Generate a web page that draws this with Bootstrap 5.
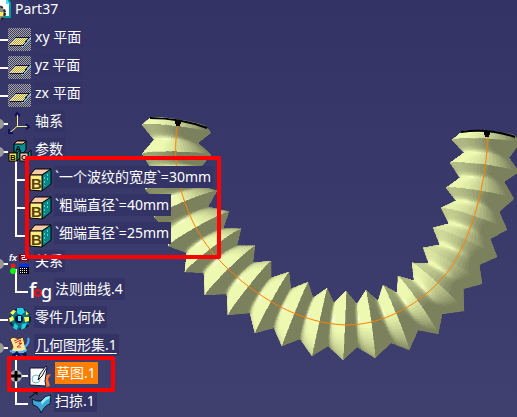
<!DOCTYPE html>
<html lang="zh-CN">
<head>
<meta charset="utf-8">
<meta name="viewport" content="width=device-width, initial-scale=1">
<title>Part37</title>
<link href="https://cdn.jsdelivr.net/npm/bootstrap@5.3.0/dist/css/bootstrap.min.css" rel="stylesheet">
<style>
  body { background: #3c3c6c; color: #fff; font-family: "Noto Sans", "Noto Sans CJK SC", sans-serif; font-size: 14px; line-height: 22px; }
  .viewer { background: linear-gradient(#333366, #40406f); }
  .tree { margin-top: -5px; }
  .node { height: 28px; }
  .node svg { height: 28px; flex: none; overflow: visible; }
  .tag { background: #333366; color: #fff; padding: 0 2px 0 1px; text-decoration: none; white-space: nowrap; }
  .tag.current { text-decoration: underline; text-underline-offset: 3px; }
  .tag.picked { background: #ff8000; }
  .outlined::after { content: ""; position: absolute; z-index: 2; border: 4px solid #f00; border-radius: 2px; pointer-events: none; }
  .outlined-params::after { top: -7px; bottom: -12px; left: 25px; width: 196px; }
  .outlined-sketch::after { top: -3px; bottom: -5px; left: 7px; width: 108px; }
  svg text { font-family: "Liberation Sans", sans-serif; font-weight: bold; }
  svg .law { font-family: "Noto Sans", sans-serif; font-weight: 500; }
</style>
<script src="https://cdn.jsdelivr.net/npm/bootstrap@5.3.0/dist/js/bootstrap.bundle.min.js"></script>
</head>
<body>

<svg width="0" height="0" class="position-absolute" aria-hidden="true">
  <defs>
    <pattern id="dither" width="2" height="2" patternUnits="userSpaceOnUse"><path fill="#a8a8a0" d="M0 0h1v1H0zM1 1h1v1H1z"/></pattern>
    <pattern id="weave" width="2" height="2" patternUnits="userSpaceOnUse"><path fill="#ffff90" d="M0 0h2v2H0z"/><path fill="#b89860" d="M0 0h1v1H0zM1 1h1v1H1z"/></pattern>
    <g id="stub"><path fill="#fff" d="M0 16h8v2H0z"/></g>
    <g id="knob"><path fill="#fff" d="M3 16h5v2H3z"/><circle cx="-1" cy="17" r="5" fill="#999"/></g>
    <g id="plane" shape-rendering="crispEdges">
      <path fill="#3a3a68" d="M8 5h23v23H8z"/><path fill="url(#dither)" d="M8 5h23v23H8z"/>
      <path fill="#80c0c8" d="M29 15h2l-7 9h-3l1-1z"/>
      <path fill="url(#weave)" d="M16 15h13l-6 7H10z"/>
      <path fill="none" stroke="#101040" d="M15 14.500h15M10 22.500h13l6-8"/>
    </g>
    <g id="cube" stroke="#000" stroke-linejoin="round">
      <path fill="#ffc8a8" d="M30 12l5-6h16l-9 6z"/><path fill="#008888" d="M42 12l9-6v15l-9 7z"/>
      <path fill="#ffef80" d="M30 12h12v16l-12-1z"/>
      <path stroke="#60d0d0" stroke-dasharray="2 2" d="M44.500 14v9m3-12v8"/>
      <text x="31" y="26" font-size="15" fill="#584010" stroke="none">B</text>
    </g>
  </defs>
</svg>

<main class="viewer position-relative min-vh-100 overflow-hidden">
  <svg id="model" class="position-absolute top-0 start-0 w-100 h-auto" viewBox="0 0 517 417" role="img" aria-label="波纹管">
    <g id="skin" shape-rendering="crispEdges"></g>
    <path fill="none" stroke="#000" stroke-width="2" d="M150 118Q180 118 207 128M461 132Q489 128 515 137"/>
    <path fill="none" stroke="#ff8000" d="M178 123C175 140 175 155 177 170C182 205 198 240 224 265C254 295 300 325 349 325C390 324 428 298 449 270C472 237 486 185 488 134"/>
    <path d="M175 120h6v4h-1v2h-4v-2h-1zM484 131h6v4h-1v2h-4v-2h-1z"/>
  </svg>

  <ul class="tree list-unstyled position-relative mb-0">
    <li class="node d-flex align-items-center">
      <svg width="14" aria-hidden="true"><path fill="#fff" stroke="#009ca0" stroke-width="2" d="M-2 3h9l3 5v14H-2z"/><path fill="#40e0ff" d="M6 3l4 6H6z"/><circle cx="-2" cy="18" r="7" fill="#888" stroke="#222" stroke-width="2" stroke-dasharray="3 2"/><path fill="#ffe860" d="M0 17h3v4H0z"/></svg>
      <a href="#" class="tag">Part37</a>
    </li>
    <li class="node d-flex align-items-center"><svg width="34" aria-hidden="true"><use href="#stub"/><use href="#plane"/></svg><a href="#" class="tag">xy 平面</a></li>
    <li class="node d-flex align-items-center"><svg width="34" aria-hidden="true"><use href="#stub"/><use href="#plane"/></svg><a href="#" class="tag">yz 平面</a></li>
    <li class="node d-flex align-items-center"><svg width="34" aria-hidden="true"><use href="#stub"/><use href="#plane"/></svg><a href="#" class="tag">zx 平面</a></li>
    <li class="node d-flex align-items-center">
      <svg width="34" aria-hidden="true"><use href="#knob"/><path fill="none" stroke="#ffef80" d="M17.500 7v12l-8 7M17 19.500h11"/><path fill="none" stroke="#101060" stroke-width="2" d="M15 9l2-3 3 3M26 17l3 3-3 2M9 22v4h4"/></svg>
      <a href="#" class="tag">轴系</a>
    </li>
    <li>
      <div class="node d-flex align-items-center">
        <svg width="34" aria-hidden="true"><use href="#knob"/><path fill="#fff" d="M15 22h2v6h-2z"/>
          <g stroke="#000" stroke-linejoin="round"><path fill="#009090" d="M14 9l3-3h9v9l-3 3h-9z"/><path fill="#ffc8a8" d="M14 9l3-3h9l-3 3z"/><path fill="#ffef40" d="M9 18h8v8H9z"/><path fill="#009090" d="M17 18l3-3v8l-3 3zM28 18l3-3v8l-3 3z"/><path fill="#ffc8b8" d="M20 18h8v8h-8z"/></g>
          <text x="15" y="17" font-size="9">A</text><text x="10" y="25" font-size="8">B</text><text x="21" y="25" font-size="8">C</text></svg>
        <a href="#" class="tag">参数</a>
      </div>
      <ul class="list-unstyled position-relative outlined outlined-params">
        <li class="node d-flex align-items-center"><svg width="54" aria-hidden="true"><path fill="#fff" d="M15 0h2v28h-2zM17 16h8v2h-8z"/><use href="#cube"/></svg><a href="#" class="tag">`一个波纹的宽度`=30mm</a></li>
        <li class="node d-flex align-items-center"><svg width="54" aria-hidden="true"><path fill="#fff" d="M15 0h2v28h-2zM17 16h8v2h-8z"/><use href="#cube"/></svg><a href="#" class="tag">`粗端直径`=40mm</a></li>
        <li class="node d-flex align-items-center"><svg width="54" aria-hidden="true"><path fill="#fff" d="M15 0h2v18h-2zM17 16h8v2h-8z"/><use href="#cube"/></svg><a href="#" class="tag">`细端直径`=25mm</a></li>
      </ul>
    </li>
    <li>
      <div class="node d-flex align-items-center">
        <svg width="34" aria-hidden="true"><use href="#knob"/><path fill="#fff" d="M15 22h2v6h-2z"/>
          <text x="9" y="14" font-size="9" font-style="italic" fill="#fff">fx</text>
          <path fill="#800010" d="M19 7h10v7H19z"/><path fill="none" stroke="#fff" d="M21 8.500h4v2h-3v2h5"/>
          <circle cx="13" cy="19" r="2.500" fill="#e02020"/><circle cx="13" cy="24" r="3" fill="#10f010"/>
          <path d="M19 17h10v10H19z"/><path fill="#0030f0" d="M19 17h10v3H19z"/><path stroke="#fff" stroke-dasharray="1 1" d="M20 21.500h8M20 23.500h8M20 25.500h8"/></svg>
        <a href="#" class="tag">关系</a>
      </div>
      <ul class="list-unstyled">
        <li class="node d-flex align-items-center"><svg width="54" aria-hidden="true"><path fill="#fff" d="M15 0h2v18h-2zM17 16h11v2H17z"/><text class="law" x="29" y="23" font-size="21" fill="#fff">f</text><circle cx="38" cy="18" r="3" fill="none" stroke="#f01010" stroke-width="2"/><text class="law" x="41" y="23" font-size="18" fill="#fff">g</text></svg><a href="#" class="tag">法则曲线.4</a></li>
      </ul>
    </li>
    <li class="node d-flex align-items-center">
      <svg width="34" aria-hidden="true"><use href="#stub"/><circle cx="20" cy="16" r="10" fill="#087080" stroke="#002838" stroke-width="2" stroke-dasharray="4 2"/><path fill="#20d0e0" d="M17 5h6l2 4-4 3-4-2zM22 21l5-1-2 5-4 2zM15 20l3 3-1 4-4-2z"/><path fill="#ffff50" d="M10 10l3-3 3 1-3 4zM9 15l4-2 1 4-4 2zM24 14h5v4l-4 1zM26 8l3 3-3 1z"/><circle cx="19" cy="16" r="4" fill="#000838"/><path fill="#50e8ff" d="M18 13h3v5h-3z"/></svg>
      <a href="#" class="tag">零件几何体</a>
    </li>
    <li>
      <div class="node d-flex align-items-center">
        <svg width="34" aria-hidden="true"><use href="#knob"/><path fill="#fff" d="M15 22h2v6h-2z"/><path fill="#ffe898" stroke="#403020" d="M10 8q3-3 6-1t7-1l2 8 3 8-5 1-6-2-5 2-1-3 2-4z"/><path fill="none" stroke="#e03020" d="M14 10l5-2M15 12l6-3-2 4 3-1-5 4h4"/><path fill="none" stroke="#50b0ff" stroke-width="2" d="M28 7q2 4-3 9M10 20q9 3 17-1"/><path fill="#001860" d="M12 24l5-4 5 6-5-2-4 3zM21 23l6-3-1 6z"/></svg>
        <a href="#" class="tag current" aria-current="true">几何图形集.1</a>
      </div>
      <ul class="list-unstyled mb-0">
        <li class="node d-flex align-items-center position-relative outlined outlined-sketch">
          <svg width="55" aria-hidden="true"><path fill="#fff" d="M15 0h2v28h-2zM22 16h6v2h-6z"/><circle cx="16" cy="17" r="6" fill="#aaa"/><path d="M14.500 12h3v3.500H21v3h-3.500V22h-3v-3.500H11v-3h3.500z"/>
            <path fill="#ff7830" d="M42 17l9-2-3 5 2 7-4 1-2-6z"/><path fill="#fff" stroke="#101040" d="M30 9h17l-2 13 1 5-16-1z"/><circle cx="36" cy="20" r="4" fill="none" stroke="#70b8c0"/><path fill="#ffffe0" stroke="#101030" d="M38 21l2-6 6-8 1 1-5 9z"/></svg>
          <a href="#" class="tag picked">草图.1</a>
        </li>
        <li class="node d-flex align-items-center"><svg width="54" aria-hidden="true"><path fill="#fff" d="M15 0h2v18h-2zM17 16h11v2H17z"/><path fill="#40a8d8" stroke="#002030" d="M32 12q5 3 9 2 4-6 10-6l-1 9q-5 1-9 9-2-7-8-8z"/><path fill="#90e8ff" d="M41 15q4-6 9-6l-1 3q-4 1-7 6z"/><path fill="none" stroke="#000" d="M29 11l8-6M33 5h4v3"/></svg><a href="#" class="tag">扫掠.1</a></li>
      </ul>
    </li>
  </ul>
</main>

<script>
// Rings of the bellows, alternating groove and crest: [innerX, innerY, outerX, outerY].
const rings = [
  [206,127,150,118],[211,133,142,125],[198,143,154,140],[211,155,142,154],[202,166,152,170],
  [212,174,145,190],[203,187,160,203],[217,191,154,217],[208,207,168,232],[229,212,168,246],
  [223,229,187,253],[241,229,185,272],[237,246,204,273],[255,246,205,295],[253,263,227,294],
  [271,261,228,315],[271,278,250,313],[289,272,255,333],[291,289,274,328],[308,282,282,346],
  [313,298,300,339],[327,288,312,356],[334,303,328,346],[346,291,343,360],[357,304,357,347],
  [366,290,375,358],[378,301,391,343],[383,285,409,350],[397,293,418,330],[398,276,438,334],
  [414,281,442,314],[412,263,464,311],[429,264,463,289],[423,248,482,284],[440,245,479,265],
  [433,228,497,257],[449,224,490,239],[441,208,507,230],[456,201,499,212],[446,188,514,199],
  [460,178,504,182],[450,163,519,172],[464,153,509,158],[452,140,520,143],[462,132,515,136]
];
const unit = v => { const l = Math.hypot(...v); return v.map(n => n / l); };
const dot = (a, b) => a.reduce((s, n, i) => s + n * b[i], 0);
const light = unit([-0.72, -0.4, 0.5]);
const half = unit([light[0], light[1], light[2] + 1]);
const mid = r => [(r[0] + r[2]) / 2, (r[1] + r[3]) / 2];
const groups = new Map();
const ALONG = 10, ACROSS = 26;

function pointAt(i, u, v) {
  const a = rings[i], b = rings[i + 1];
  const w = i % 2 === 0 ? Math.pow(u, 1.25) : 1 - Math.pow(1 - u, 1.25);
  const r = a.map((n, k) => n + (b[k] - n) * w);
  const s = (1 - Math.cos(Math.PI * v)) / 2;
  const bulge = 3 * Math.sin(Math.PI * v) * Math.max(-1, Math.min(1, (330 - mid(r)[0]) / 120));
  const d = unit([r[2] - r[0], r[3] - r[1]]);
  return [r[0] + (r[2] - r[0]) * s + d[1] * -bulge, r[1] + (r[3] - r[1]) * s + d[0] * bulge];
}
for (let i = 0; i < rings.length - 1; i++) {
  const a = mid(rings[Math.max(0, i - 1)]), b = mid(rings[Math.min(rings.length - 1, i + 2)]);
  const t = unit([b[0] - a[0], b[1] - a[1]]), p = [-t[1], t[0]];
  const rising = i % 2 === 0;
  for (let j = 0; j < ALONG; j++) for (let k = 0; k < ACROSS; k++) {
    const u = (j + .5) / ALONG, c = -Math.cos(Math.PI * (k + .5) / ACROSS);
    const fromGroove = rising ? u : 1 - u;
    const slope = (rising ? 1 : -1) * 1.1 * Math.sin(Math.PI * Math.min(1, fromGroove * 1.6) / 2);
    const n = unit([p[0] * c - t[0] * slope, p[1] * c - t[1] * slope, Math.sqrt(1 - c * c)]);
    const lit = Math.max(0, Math.min(1, dot(n, light) * 1.15));
    const spec = Math.pow(Math.max(0, dot(n, half)), 70) * .6;
    const tone = [[122, 238], [128, 250], [92, 176]].map(([lo, hi]) => {
      const base = lo + (hi - lo) * lit;
      return Math.round((base + (255 - base) * spec) / 3) * 3;
    });
    const key = `rgb(${tone})`;
    const quad = [[j, k], [j + 1, k], [j + 1, k + 1], [j, k + 1]]
      .map(([x, y]) => pointAt(i, x / ALONG, y / ACROSS).map(n => n.toFixed(2)).join(" "));
    groups.set(key, (groups.get(key) || "") + "M" + quad.join("L") + "Z");
  }
}
const skin = document.getElementById("skin");
for (const [fill, d] of groups) {
  const path = document.createElementNS("http://www.w3.org/2000/svg", "path");
  path.setAttribute("fill", fill);
  path.setAttribute("stroke", fill);
  path.setAttribute("stroke-width", ".3");
  path.setAttribute("d", d);
  skin.append(path);
}
</script>
</body>
</html>
